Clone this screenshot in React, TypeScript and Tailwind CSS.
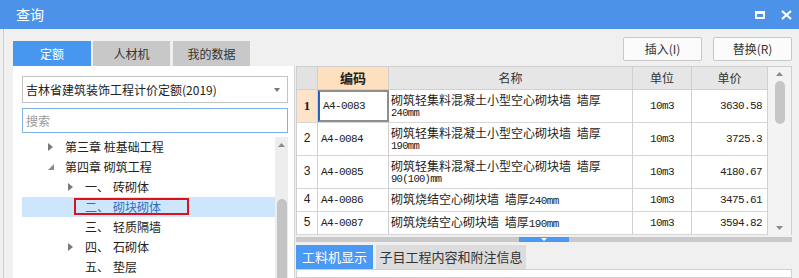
import React from "react";

const CJK = "font-['Noto_Sans_CJK_SC','Noto_Sans',sans-serif]";
const MONO = "font-['Liberation_Mono',monospace] text-[11px] tracking-[-0.6px]";
const MONO2 = "font-['Liberation_Mono',monospace] text-[10.5px] tracking-[-0.7px] leading-[13px]";

function RightTri({ color = "#7a7a7a" }: { color?: string }) {
  return (
    <svg width="5" height="8" viewBox="0 0 5 8">
      <path d="M0 0 L5 4 L0 8 Z" fill={color} />
    </svg>
  );
}
function DownTri() {
  return (
    <svg width="6" height="6" viewBox="0 0 6 6">
      <path d="M6 0 L6 6 L0 6 Z" fill="#8a8a8a" />
    </svg>
  );
}

type TreeItem = {
  level: number;
  arrow: "right" | "down" | null;
  num?: string;
  text: string;
  selected?: boolean;
};

const tree: TreeItem[] = [
  { level: 0, arrow: "right", text: "第三章 桩基础工程" },
  { level: 0, arrow: "down", text: "第四章 砌筑工程" },
  { level: 1, arrow: "right", num: "一、", text: "砖砌体" },
  { level: 1, arrow: null, num: "二、", text: "砌块砌体", selected: true },
  { level: 1, arrow: null, num: "三、", text: "轻质隔墙" },
  { level: 1, arrow: "right", num: "四、", text: "石砌体" },
  { level: 1, arrow: null, num: "五、", text: "垫层" },
];

type Row = {
  n: string;
  code: string;
  name: React.ReactNode;
  unit: string;
  price: string;
  h: string;
};

const Line1 = () => (
  <div>
    砌筑轻集料混凝土小型空心砌块墙 <span className="ml-[3px]">墙厚</span>
  </div>
);

const rows: Row[] = [
  {
    n: "1",
    code: "A4-0083",
    name: (
      <>
        <Line1 />
        <div className={MONO2}>240mm</div>
      </>
    ),
    unit: "10m3",
    price: "3630.58",
    h: "h-[33px]",
  },
  {
    n: "2",
    code: "A4-0084",
    name: (
      <>
        <Line1 />
        <div className={MONO2}>190mm</div>
      </>
    ),
    unit: "10m3",
    price: "3725.3",
    h: "h-[33px]",
  },
  {
    n: "3",
    code: "A4-0085",
    name: (
      <>
        <Line1 />
        <div className={MONO2}>90(100)mm</div>
      </>
    ),
    unit: "10m3",
    price: "4180.67",
    h: "h-[33px]",
  },
  {
    n: "4",
    code: "A4-0086",
    name: (
      <div>
        砌筑烧结空心砌块墙 <span className="ml-[3px]">墙厚</span>
        <span className={MONO}>240mm</span>
      </div>
    ),
    unit: "10m3",
    price: "3475.61",
    h: "h-[23px]",
  },
  {
    n: "5",
    code: "A4-0087",
    name: (
      <div>
        砌筑烧结空心砌块墙 <span className="ml-[3px]">墙厚</span>
        <span className={MONO}>190mm</span>
      </div>
    ),
    unit: "10m3",
    price: "3594.82",
    h: "h-[23px]",
  },
];

export default function App() {
  return (
    <div className={`w-[799px] h-[278px] bg-[#f0f0f0] flex flex-col overflow-hidden text-[#333] ${CJK}`}>
      {/* Title bar */}
      <div className="h-[29px] shrink-0 bg-[#4b92e8] flex items-center pl-[16px] pr-[6px] text-white text-[14px]">
        <span className="flex-1">查询</span>
        <div className="flex items-center gap-[16px] mr-[1px]">
          <div className="w-[10px] h-[8px] border-white border-[2px] border-t-[3px]" />
          <svg width="11" height="10" viewBox="0 0 11 10">
            <path d="M1 1 L10 9 M10 1 L1 9" stroke="white" strokeWidth="2.2" />
          </svg>
        </div>
      </div>

      {/* Body */}
      <div className="flex-1 flex ml-[3px] border-l border-[#cfcfcf] pl-[9px] min-h-0">
        {/* Left column */}
        <div className="w-[282px] flex flex-col pt-[12px]">
          <div className="flex h-[25px] text-[12px]">
            <div className="w-[78px] bg-[#4797f1] text-white flex items-center justify-center">定额</div>
            <div className="w-[77px] ml-[2px] bg-[#c8c8c8] flex items-center justify-center">人材机</div>
            <div className="w-[77px] ml-[3px] bg-[#c8c8c8] flex items-center justify-center">我的数据</div>
          </div>
          <div className="flex-1 bg-white border-r border-[#d4d4d4] pt-[10px] pl-[9px] pr-[6px] flex flex-col min-h-0">
            <div className="h-[27px] border border-[#c4c4c4] flex items-center pl-[3px] pr-[7px] text-[12px] text-[#222]">
              <span className="flex-1">吉林省建筑装饰工程计价定额(2019)</span>
              <svg width="6" height="4" viewBox="0 0 6 4">
                <path d="M0 0 L6 0 L3 4 Z" fill="#777" />
              </svg>
            </div>
            <div className="h-[25px] mt-[5px] border border-[#7fb3ea] flex items-center pl-[3px] text-[12px] text-[#9a9a9a]">
              搜索
            </div>
            <div className="flex-1 flex mt-[4px] min-h-0">
              <div className="flex-1 text-[12px] text-[#222]">
                {tree.map((t, i) => (
                  <div
                    key={i}
                    className={`relative h-[20px] flex items-center ${t.selected ? "bg-[#cde6fb] text-[#2f6fc0]" : ""}`}
                    style={{ paddingLeft: 26 + t.level * 20 }}
                  >
                    <div className="w-[17px] flex items-center">
                      {t.arrow === "right" && <RightTri />}
                      {t.arrow === "down" && <DownTri />}
                    </div>
                    {t.num && <span className="w-[28px]">{t.num}</span>}
                    <span>{t.text}</span>
                    {t.selected && (
                      <div className="absolute left-[52px] top-[1px] w-[115px] h-[17px] border-2 border-[#d8131b]" />
                    )}
                  </div>
                ))}
              </div>
              <div className="w-[13px] bg-[#ededed] flex flex-col items-center">
                <svg className="mt-[6px]" width="7" height="4" viewBox="0 0 7 4">
                  <path d="M0 4 L3.5 0 L7 4 Z" fill="#8a8a8a" />
                </svg>
                <div className="mt-[52px] w-[10px] flex-1 bg-[#c4c4c4] rounded-t-[5px]" />
              </div>
            </div>
          </div>
        </div>

        {/* Right column */}
        <div className="w-[496px] ml-[1px] flex flex-col">
          <div className="h-[37px] shrink-0 flex items-start justify-end pt-[8px] gap-[11px]">
            <div className="w-[79px] h-[24px] bg-[#fbfbfb] border border-[#c8c8c8] rounded-[2px] flex items-center justify-center text-[12px]">
              插入(I)
            </div>
            <div className="w-[79px] h-[24px] bg-[#fbfbfb] border border-[#c8c8c8] rounded-[2px] flex items-center justify-center text-[12px]">
              替换(R)
            </div>
          </div>

          {/* Table */}
          <div className="shrink-0 border-t border-l border-r border-[#cfcfcf] bg-white flex h-[169px]">
            <div className="w-[471px] flex flex-col border-r border-[#d0d0d0]">
              <div className="h-[23px] flex text-[12px] bg-[#e6e6e6] border-b border-[#d0d0d0]">
                <div className="w-[21px] border-r border-[#d0d0d0] bg-[#e2e2e2]" />
                <div className="w-[71px] border-r border-[#d0d0d0] bg-[#fde0bd] flex items-center justify-center font-bold text-[13px] text-[#222]">编码</div>
                <div className="w-[244px] border-r border-[#d0d0d0] flex items-center justify-center">名称</div>
                <div className="w-[59px] border-r border-[#d0d0d0] flex items-center justify-center">单位</div>
                <div className="flex-1 flex items-center justify-center">单价</div>
              </div>
              {rows.map((r, i) => (
                <div key={i} className={`${r.h} shrink-0 flex border-b border-[#d6d6d6] text-[12px] text-[#222]`}>
                  <div
                    className={`w-[21px] border-r border-[#d0d0d0] flex items-center justify-center ${
                      i === 0 ? "bg-[#fde4c8] font-bold font-['Liberation_Serif',serif] text-[13px]" : "font-['Liberation_Mono',monospace] text-[12px]"
                    }`}
                  >
                    {r.n}
                  </div>
                  <div
                    className={`w-[71px] flex items-center pl-[3px] ${MONO} ${
                      i === 0 ? "border-2 border-[#8e8e8e] border-l-[#2262cf] pl-[2px]" : "border-r border-[#d0d0d0]"
                    }`}
                  >
                    {r.code}
                  </div>
                  <div className="w-[244px] border-r border-[#d0d0d0] flex flex-col justify-center pl-[2px] leading-[15px]">
                    {r.name}
                  </div>
                  <div className={`w-[59px] border-r border-[#d0d0d0] flex items-center justify-center ${MONO}`}>
                    {r.unit}
                  </div>
                  <div className={`flex-1 flex items-center justify-end pr-[5px] ${MONO}`}>{r.price}</div>
                </div>
              ))}
            </div>
            <div className="flex-1 bg-[#f3f3f3] flex flex-col items-center">
              <svg className="mt-[5px]" width="7" height="4" viewBox="0 0 7 4">
                <path d="M0 4 L3.5 0 L7 4 Z" fill="#8a8a8a" />
              </svg>
              <div className="mt-[5px] w-[10px] h-[43px] bg-[#c6c6c6] rounded-[5px]" />
              <div className="flex-1" />
              <svg className="mb-[5px]" width="7" height="4" viewBox="0 0 7 4">
                <path d="M0 0 L7 0 L3.5 4 Z" fill="#8a8a8a" />
              </svg>
            </div>
          </div>

          {/* Splitter */}
          <div className="h-[10px] shrink-0 flex flex-col">
            <div className="h-[2px]" />
            <div className="h-[5px] bg-[#c9c9c9] flex justify-center">
              <div className="w-[50px] bg-[#4a9af3] flex justify-center items-center">
                <svg width="6" height="3" viewBox="0 0 6 3">
                  <path d="M0 0 L6 0 L3 3 Z" fill="white" />
                </svg>
              </div>
            </div>
          </div>

          {/* Bottom tabs */}
          <div className="h-[24px] shrink-0 flex text-[13px]">
            <div className="w-[77px] bg-[#4a9af5] text-white flex items-center justify-center">工料机显示</div>
            <div className="w-[150px] ml-[3px] bg-[#dcdcdc] flex items-center justify-center text-[#333]">子目工程内容和附注信息</div>
          </div>
          <div className="flex-1 bg-white border border-[#d0d0d0]" />
        </div>
      </div>
    </div>
  );
}
